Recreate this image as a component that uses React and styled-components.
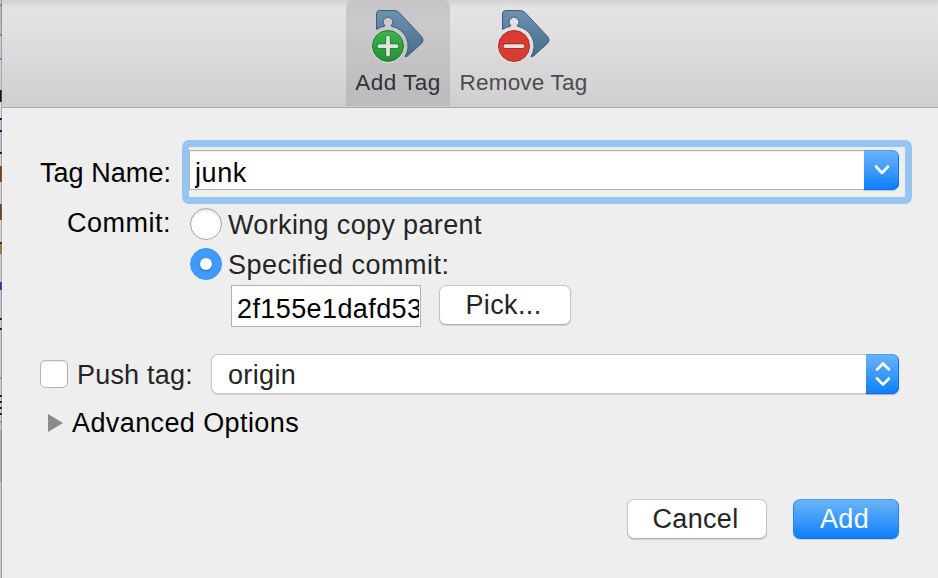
import React from "react";
import styled, { createGlobalStyle } from "styled-components";

const GlobalStyle = createGlobalStyle`
  *, *::before, *::after { box-sizing: border-box; }
  body { margin: 0; background: #eee; overflow: hidden; }
  button, input { font: inherit; letter-spacing: inherit; margin: 0; }
`;

const Shell = styled.div`
  display: flex;
  width: 938px;
  height: 578px;
  background: #eeeeee;
  font: 27px/30px "Liberation Sans", Arial, sans-serif;
  letter-spacing: 0.35px;
  color: #000;
`;

/* Sliver of the window that lies behind the sheet. */
const BackgroundEdge = styled.div`
  flex: none;
  width: 2px;
  background: linear-gradient(
    #c4c4c6 0 4px, #8d8d90 4px 6px, #b9b9bb 6px 34px, #858588 34px 36px,
    #c8c8ca 36px 58px, #b07a3c 58px 60px, #d0d0d2 60px 90px, #17141c 90px 102px,
    #dedede 102px 118px, #000 118px 120px, #a9c4d2 120px 130px, #000 130px 132px,
    #a9c4d2 132px 152px, #000 152px 154px, #d2d2d4 154px 166px, #7c3d06 166px 182px,
    #cfd1d5 182px 204px, #7c3d06 204px 220px, #cfd5dc 220px 242px, #222 242px 244px,
    #a87732 244px 254px, #c5cbd2 254px 282px, #2630a0 282px 290px, #bcc7d2 290px 318px,
    #111 318px 320px, #ccc 320px 328px, #111 328px 330px, #c6c6c6 330px 377px,
    #999 377px 379px, #ccc 379px 395px, #111 395px 397px, #ccc 397px 401px,
    #111 401px 403px, #ccc 403px 407px, #111 407px 409px, #ccc 409px 413px,
    #111 413px 415px, #ccc 415px 421px, #999 421px 423px, #c8c8c8 423px 430px,
    #a6a6a6 430px 482px, #c6c6c6 482px 578px
  );
  border-right: 1px solid rgba(125, 125, 125, 0.5);
`;

const Sheet = styled.main`
  flex: 1;
  display: flex;
  flex-direction: column;
`;

const Toolbar = styled.header`
  display: flex;
  height: 108px;
  padding-left: 344px;
  border-bottom: 1px solid #a9a9a9;
  background: linear-gradient(#d2d0d3 0, #dbd9dc 4px, #e4e2e5 7px, #e2e0e3 24px, #cfced0 106px);
`;

const ToolItem = styled.button`
  display: flex;
  flex-direction: column;
  align-items: center;
  width: ${(p) => p.$width}px;
  height: 106px;
  padding: 6px 0 0;
  border: 0;
  border-radius: 7px 7px 0 0;
  background: ${(p) => (p.$active ? "linear-gradient(#c6c4c7, #cac8cb 25px, #bbbabc)" : "none")};
  color: ${(p) => (p.$active ? "#333134" : "#4e4b4f")};
  font-size: 22.5px;
  line-height: 26px;
  letter-spacing: ${(p) => p.$spacing}px;
  white-space: nowrap;
  svg { display: block; margin-bottom: 6px; }
`;

const Form = styled.form`
  display: flex;
  flex-direction: column;
  padding: 32px 26px 0 38px;
`;

const Row = styled.div`
  display: flex;
  align-items: flex-start;
  height: ${(p) => p.$height}px;
  margin-left: ${(p) => p.$indent || 0}px;
`;

const Label = styled.label`
  flex: none;
  width: ${(p) => p.$width || "auto"};
  padding-top: ${(p) => p.$top || 0}px;
  padding-right: ${(p) => (p.$align ? 1 : 0)}px;
  text-align: ${(p) => p.$align || "left"};
  letter-spacing: ${(p) => p.$spacing ?? 0.35}px;
  color: ${(p) => (p.$soft ? "#252525" : "#000")};
  white-space: nowrap;
`;

const FocusRing = styled.div`
  flex: none;
  display: flex;
  width: 730px;
  height: 64px;
  margin-left: 10px;
  padding: 3px 6px 7px 0;
  border: 7px solid #97c5f1;
  border-radius: 7px;
`;

const ComboInput = styled.input`
  flex: 1;
  min-width: 0;
  height: 40px;
  padding: 6px 0 0 5px;
  border: 1px solid #b3b3b3;
  border-right: 0;
  border-radius: 0;
  background: #fff;
  outline: 0;
  color: #000;
  box-shadow: inset 0 1px 0 #f0f0f0;
  && { letter-spacing: 0.6px; }
`;

const BlueCap = styled.span`
  flex: none;
  display: grid;
  place-items: center;
  width: ${(p) => p.$width}px;
  height: 40px;
  border-radius: 0 7px 7px 0;
  background: linear-gradient(#6bb3fa, #3d9bfb 50%, #0d7dfe);
  box-shadow: inset 0 1px 0 #4a9df0, inset -1px -1px 0 #0e6ff0, 0 1px 1px rgba(0, 0, 0, 0.18);
`;

const Radio = styled.span`
  flex: none;
  display: grid;
  place-items: center;
  width: 32px;
  height: 32px;
  margin-right: 6px;
  border-radius: 50%;
  border: 1px solid ${(p) => (p.$checked ? "#3c98f8" : "#a6a6a6")};
  background: ${(p) => (p.$checked ? "#3f9bfb" : "#fff")};
  box-shadow: ${(p) => (p.$checked ? "none" : "inset 0 2px 2px rgba(0,0,0,.1)")};
`;

const RadioDot = styled.span`
  width: 12px;
  height: 12px;
  border-radius: 50%;
  background: #fff;
  box-shadow: 0 1px 2px rgba(0, 0, 0, 0.35);
`;

const HashInput = styled.input`
  flex: none;
  width: 190px;
  height: 42px;
  padding: 6px 1px 0 5px;
  border: 1px solid #b3b3b3;
  border-radius: 0;
  background: #fff;
  outline: 0;
  color: #000;
  && { letter-spacing: 0.4px; }
`;

const Button = styled.button`
  flex: none;
  width: ${(p) => p.$width}px;
  height: 40px;
  padding: 0 3px 0 0;
  border: 1px solid;
  border-color: ${(p) => (p.$primary ? "#499cf1 #2580f5 #0e6ff0" : "#c9c9c9 #c4c4c4 #b0b0b0")};
  border-radius: 7px;
  background: ${(p) => (p.$primary ? "linear-gradient(#6bb3fa, #3d9bfb 50%, #0d7dfe)" : "#fff")};
  box-shadow: 0 1px 1px rgba(0, 0, 0, 0.13);
  color: ${(p) => (p.$primary ? "#fff" : "#252525")};
`;

const Checkbox = styled.span`
  flex: none;
  width: 28px;
  height: 28px;
  margin: 6px 9px 0 0;
  border: 1px solid #b4b4b4;
  border-radius: 5px;
  background: #fff;
  box-shadow: inset 0 1px 2px rgba(0, 0, 0, 0.1);
`;

const Select = styled.div`
  display: flex;
  width: 688px;
  height: 40px;
  border-radius: 7px;
  background: #fff;
  box-shadow: inset 0 0 0 1px #c4c4c4, 0 1px 1px rgba(0, 0, 0, 0.13);
`;

const SelectValue = styled.span`
  flex: 1;
  padding: 6px 0 0 17px;
  color: #252525;
`;

const Disclosure = styled.div`
  display: flex;
  height: 30px;
  margin: 14px 0 0 8px;
  svg { display: block; margin: 6px 9px 0 0; }
`;

const Actions = styled.footer`
  display: flex;
  justify-content: flex-end;
  gap: 26px;
  margin: 61px 13px 0 0;
`;

function TagIcon({ kind }) {
  const add = kind === "add";
  return (
    <svg width="56" height="58" viewBox="0 0 56 58">
      <defs>
        <linearGradient id={`tag-${kind}`} x1="0" y1="0" x2="0" y2="1">
          <stop offset="0" stopColor="#6c91b1" />
          <stop offset="1" stopColor="#496c8c" />
        </linearGradient>
        <linearGradient id={`disc-${kind}`} x1="0" y1="0" x2="0" y2="1">
          <stop offset="0" stopColor={add ? "#3cb54b" : "#dd3a31"} />
          <stop offset="1" stopColor={add ? "#258f35" : "#d53f34"} />
        </linearGradient>
      </defs>
      <path
        d="M6.5 23.4V8Q6.5 4.5 10 4.5H24Q27 4.5 29.3 6.8L51.7 30.7Q54.6 34 51.7 37.2L37.3 50.2Q36.3 51 35.1 50.5A20 20 0 0 0 21.6 20.3Q20.8 20 21.6 19A4.7 4.7 0 1 0 14.4 19Q15.2 20 14.4 20.3A20 20 0 0 0 6.5 23.4Z"
        fill={`url(#tag-${kind})`}
        stroke="#3b5c7a"
      />
      <circle cx="18" cy="40.8" r="16" fill="#e9edeb" />
      <circle cx="18" cy="40" r="15.5" fill={`url(#disc-${kind})`} stroke={add ? "#207c2d" : "#b42b27"} />
      <path
        d={add ? "M9.5 40H26.5M18 31.5V48.5" : "M9.5 40H26.5"}
        stroke={add ? "#217d2e" : "#a92823"}
        strokeWidth="5.4"
        strokeLinecap="round"
      />
      <path
        d={add ? "M9.5 40.2H26.5M18 31.5V48.5" : "M9.5 40.2H26.5"}
        stroke="#e2e2e2"
        strokeWidth="3.8"
        strokeLinecap="round"
      />
    </svg>
  );
}

const Chevron = ({ d, height }) => (
  <svg width="18" height={height} viewBox={`0 0 18 ${height}`} fill="none" stroke="#fff" strokeWidth="2.6" strokeLinecap="round" strokeLinejoin="round">
    <path d={d} />
  </svg>
);

export default function App() {
  return (
    <>
      <GlobalStyle />
      <Shell>
        <BackgroundEdge />
        <Sheet>
          <Toolbar>
            <ToolItem $active $width={104} $spacing={0.5}>
              <TagIcon kind="add" />
              Add Tag
            </ToolItem>
            <ToolItem $width={147} $spacing={0.2}>
              <TagIcon kind="remove" />
              Remove Tag
            </ToolItem>
          </Toolbar>
          <Form>
            <Row $height={68}>
              <Label $width="132px" $top={18} $align="right" $spacing={0.05}>Tag Name:</Label>
              <FocusRing>
                <ComboInput defaultValue="junk" />
                <BlueCap $width={35}><Chevron height={12} d="M3 2.5L9 9L15 2.5" /></BlueCap>
              </FocusRing>
            </Row>
            <Row $height={40}>
              <Label $width="132px" $align="right" $spacing={0.5}>Commit:</Label>
              <Row $indent={18}>
                <Radio />
                <Label $top={2} $soft>Working copy parent</Label>
              </Row>
            </Row>
            <Row $height={37} $indent={150}>
              <Radio $checked><RadioDot /></Radio>
              <Label $top={2} $spacing={0.5} $soft>Specified commit:</Label>
            </Row>
            <Row $height={69} $indent={191}>
              <HashInput defaultValue="2f155e1dafd53" />
              <Row $indent={18}>
                <Button type="button" $width={132}>Pick...</Button>
              </Row>
            </Row>
            <Row $height={40}>
              <Checkbox />
              <Label $width="134px" $top={6} $spacing={0.2} $soft>Push tag:</Label>
              <Select>
                <SelectValue>origin</SelectValue>
                <BlueCap $width={33}><Chevron height={26} d="M3 8.5L9 2.5L15 8.5M3 17.5L9 23.5L15 17.5" /></BlueCap>
              </Select>
            </Row>
            <Disclosure>
              <svg width="15" height="18" viewBox="0 0 15 18"><path d="M0 0L15 9L0 18Z" fill="#8b8b8b" /></svg>
              <Label $spacing={0.4}>Advanced Options</Label>
            </Disclosure>
            <Actions>
              <Button type="button" $width={140}>Cancel</Button>
              <Button type="button" $width={106} $primary>Add</Button>
            </Actions>
          </Form>
        </Sheet>
      </Shell>
    </>
  );
}
